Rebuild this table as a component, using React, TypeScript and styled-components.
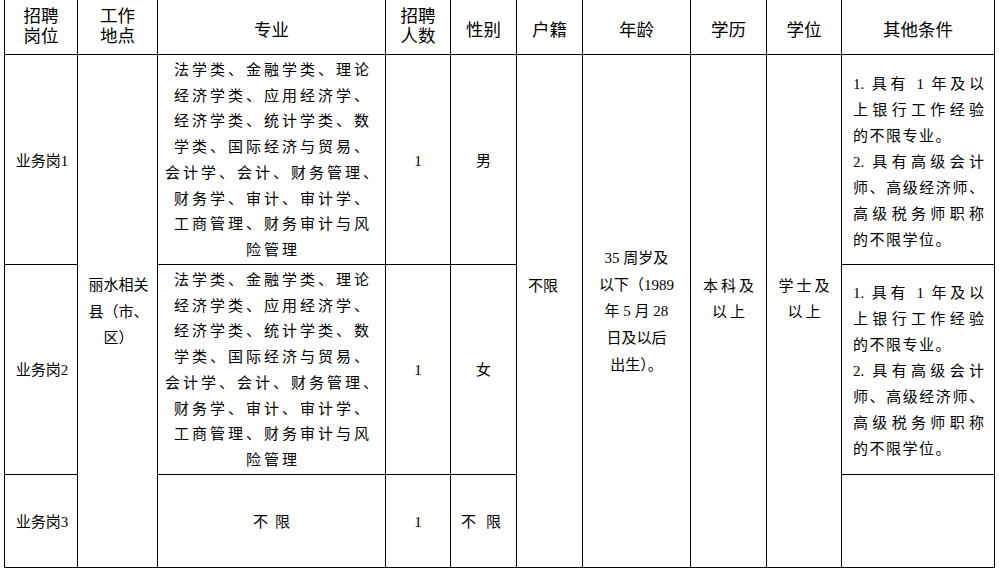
import React from "react";
import styled, { createGlobalStyle } from "styled-components";

const Global = createGlobalStyle`
  html, body { margin: 0; padding: 0; background: #fff; }
  body {
    font-family: "Liberation Serif", "Noto Sans CJK SC", serif;
    color: #000;
    overflow: hidden;
  }
`;

const Table = styled.table`
  border-collapse: collapse;
  table-layout: fixed;
  width: 991px;
  margin: -1px 0 0 4px;
`;

const Row = styled.tr<{ $h: number }>`
  height: ${(p) => p.$h}px;
`;

const HeadCell = styled.th<{ $single?: boolean }>`
  border: 1px solid #000;
  padding: ${(p) => (p.$single ? "6px 0 0" : "0 0 3px")};
  font-family: "Liberation Sans", "Noto Sans CJK SC", sans-serif;
  font-weight: 400;
  font-size: 17.5px;
  line-height: 20px;
  text-align: center;
  vertical-align: middle;
`;

const Cell = styled.td<{
  $valign?: "top" | "middle";
  $align?: "left" | "center";
  $pad?: string;
  $spacing?: number;
}>`
  border: 1px solid #000;
  padding: ${(p) => p.$pad ?? "0"};
  font-size: 15px;
  line-height: 26px;
  letter-spacing: ${(p) => p.$spacing ?? 0}px;
  text-align: ${(p) => p.$align ?? "center"};
  vertical-align: ${(p) => p.$valign ?? "middle"};
`;

const Stack = styled.div<{ $pitch?: number; $spacing?: number }>`
  line-height: ${(p) => p.$pitch ?? 26}px;
  letter-spacing: ${(p) => p.$spacing ?? 0}px;
`;

const Line = styled.div<{ $justify?: boolean }>`
  white-space: nowrap;
  ${(p) =>
    p.$justify
      ? `text-align: justify; text-align-last: justify; letter-spacing: 0;`
      : ``}
`;

const MajorStack = styled(Stack)`
  padding-left: 3px;
  text-align: center;
`;

const OtherStack = styled(Stack)`
  text-align: left;
`;

const majorLines = [
  "法学类、金融学类、理论",
  "经济学类、应用经济学、",
  "经济学类、统计学类、数",
  "学类、国际经济与贸易、",
  "会计学、会计、财务管理、",
  "财务学、审计、审计学、",
  "工商管理、财务审计与风",
  "险管理",
];

const otherParas: string[][] = [
  ["1. 具有 1 年及以", "上银行工作经验", "的不限专业。"],
  ["2. 具有高级会计", "师、高级经济师、", "高级税务师职称", "的不限学位。"],
];

const ageLines = ["35 周岁及", "以下（1989", "年 5 月 28", "日及以后", "出生）。"];

const Major = () => (
  <MajorStack $pitch={25.7} $spacing={3}>
    {majorLines.map((l, i) => (
      <Line key={i}>{l}</Line>
    ))}
  </MajorStack>
);

const Other = () => (
  <OtherStack $pitch={26} $spacing={1.5}>
    {otherParas.map((para, pi) =>
      para.map((l, i) => (
        <Line key={`${pi}-${i}`} $justify={i < para.length - 1}>
          {l}
        </Line>
      ))
    )}
  </OtherStack>
);

const widths = [73, 80, 228, 65, 66, 66, 108, 76, 75, 153];

export default function App() {
  return (
    <>
      <Global />
      <Table>
        <colgroup>
          {widths.map((w, i) => (
            <col key={i} style={{ width: w }} />
          ))}
        </colgroup>
        <thead>
          <Row $h={55}>
            <HeadCell>
              招聘
              <br />
              岗位
            </HeadCell>
            <HeadCell>
              工作
              <br />
              地点
            </HeadCell>
            <HeadCell $single>专业</HeadCell>
            <HeadCell>
              招聘
              <br />
              人数
            </HeadCell>
            <HeadCell $single>性别</HeadCell>
            <HeadCell $single>户籍</HeadCell>
            <HeadCell $single>年龄</HeadCell>
            <HeadCell $single>学历</HeadCell>
            <HeadCell $single>学位</HeadCell>
            <HeadCell $single>其他条件</HeadCell>
          </Row>
        </thead>
        <tbody>
          <Row $h={210}>
            <Cell $pad="2px 0 0 2px">业务岗1</Cell>
            <Cell rowSpan={3} $pad="2px 4px 0 6px">
              <Stack $pitch={26.5}>
                <Line>丽水相关</Line>
                <Line>县（市、</Line>
                <Line>区）</Line>
              </Stack>
            </Cell>
            <Cell $valign="top" $pad="3px 0 0">
              <Major />
            </Cell>
            <Cell $pad="2px 0 0">1</Cell>
            <Cell $pad="2px 0 0">男</Cell>
            <Cell rowSpan={3} $valign="top" $align="left" $pad="218px 0 0 11px">
              不限
            </Cell>
            <Cell rowSpan={3} $pad="2px 0 0" $spacing={2}>
              <Stack $pitch={26.75}>
                {ageLines.map((l, i) => (
                  <Line key={i}>{l}</Line>
                ))}
              </Stack>
            </Cell>
            <Cell rowSpan={3} $valign="top" $pad="218px 0 0 3px" $spacing={3}>
              本科及
              <br />
              以上
            </Cell>
            <Cell rowSpan={3} $valign="top" $pad="218px 0 0 3px" $spacing={3}>
              学士及
              <br />
              以上
            </Cell>
            <Cell $align="left" $pad="4px 10px 0 11px">
              <Other />
            </Cell>
          </Row>
          <Row $h={209}>
            <Cell $pad="2px 0 0 2px">业务岗2</Cell>
            <Cell $valign="top" $pad="3px 0 0">
              <Major />
            </Cell>
            <Cell $pad="2px 0 0">1</Cell>
            <Cell $pad="2px 0 0">女</Cell>
            <Cell $align="left" $pad="4px 10px 0 11px">
              <Other />
            </Cell>
          </Row>
          <Row $h={93}>
            <Cell $pad="2px 0 0 2px">业务岗3</Cell>
            <Cell $pad="2px 0 0 7px" $spacing={7}>
              不限
            </Cell>
            <Cell $pad="2px 0 0">1</Cell>
            <Cell $pad="2px 0 0 5px" $spacing={10}>
              不限
            </Cell>
            <Cell />
          </Row>
        </tbody>
      </Table>
    </>
  );
}
